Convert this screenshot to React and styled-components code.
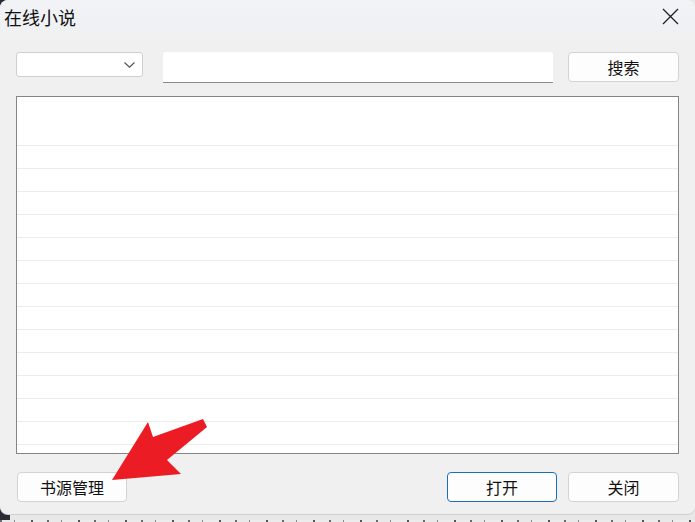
import React from "react";
import styled, { createGlobalStyle } from "styled-components";

const GlobalStyle = createGlobalStyle`
  html, body {
    margin: 0;
    padding: 0;
    background: #dedede;
  }
  body {
    font-family: "Noto Sans CJK SC", "Noto Sans", sans-serif;
  }
`;

const Desktop = styled.div`
  position: relative;
  width: 695px;
  height: 522px;
  overflow: hidden;
  background:
    repeating-linear-gradient(90deg, #6a6a6a 0 2px, #e9e9e9 2px 14px, #8a8a8a 14px 15px, #ececec 15px 31px, #555 31px 33px, #ebebeb 33px 47px) bottom / 100% 2px no-repeat,
    linear-gradient(90deg, #2b2b35 0 10px, #e8e8e8 10px);
  display: flex;
  flex-direction: column;
`;

const Window = styled.div`
  width: 695px;
  height: 514px;
  border-radius: 8px;
  overflow: hidden;
  background: #f0f0f0;
  display: flex;
  flex-direction: column;
  box-shadow: 0 1px 0 #cfcfcf;
`;

const TitleBar = styled.div`
  height: 36px;
  flex: none;
  display: flex;
  align-items: center;
  justify-content: space-between;
  padding: 0 16px 0 4px;
  background: linear-gradient(#f1f3f6, #eff0f2);
`;

const Title = styled.span`
  font-size: 18px;
  color: #111;
  line-height: 1;
  margin-top: -3px;
`;

const CloseIcon = styled.svg`
  width: 17px;
  height: 17px;
  margin-top: -3px;
`;

const Body = styled.div`
  flex: 1;
  display: flex;
  flex-direction: column;
  padding: 16px 16px 12px 16px;
`;

const TopRow = styled.div`
  display: flex;
  align-items: flex-start;
  height: 31px;
`;

const Combo = styled.div`
  width: 127px;
  height: 25px;
  box-sizing: border-box;
  background: #fff;
  border: 1px solid #cfcfcf;
  border-radius: 3px;
  display: flex;
  align-items: center;
  justify-content: flex-end;
  padding-right: 7px;
`;

const SearchInput = styled.div`
  width: 390px;
  height: 31px;
  margin-left: 20px;
  box-sizing: border-box;
  background: #fff;
  border-bottom: 1px solid #8a8a8a;
  border-radius: 3px 3px 0 0;
`;

const Button = styled.button`
  width: ${p => p.w || 111}px;
  height: 30px;
  box-sizing: border-box;
  margin: 0;
  padding: 0;
  font-family: "Noto Sans CJK SC", sans-serif;
  font-size: 16px;
  color: #111;
  background: #fdfdfd;
  border: ${p => (p.primary ? "1.5px solid #1a6fbd" : "1px solid #d3d3d3")};
  border-radius: 4px;
  display: flex;
  align-items: center;
  justify-content: center;
  line-height: 1;
`;

const SearchButton = styled(Button)`
  margin-left: 15px;
`;

const List = styled.div`
  margin-top: 13px;
  height: 358px;
  box-sizing: border-box;
  border: 1px solid #858585;
  background: #fff;
  overflow: hidden;
`;

const ListHeader = styled.div`
  height: 26px;
`;

const Row = styled.div`
  height: 23px;
  box-sizing: border-box;
  border-bottom: 1px solid #ececec;
`;

const BottomRow = styled.div`
  margin-top: 18px;
  display: flex;
  align-items: center;
  padding-left: 1px;
`;

const Spacer = styled.div`
  flex: 1;
`;

const GapButton = styled(Button)`
  margin-left: 11px;
`;

const Arrow = styled.svg`
  position: absolute;
  left: 0;
  top: 0;
  width: 695px;
  height: 522px;
  pointer-events: none;
`;

export default function App() {
  return (
    <>
      <GlobalStyle />
      <Desktop>
        <Window>
          <TitleBar>
            <Title>在线小说</Title>
            <CloseIcon viewBox="0 0 17 17">
              <path d="M1 1 L16 16 M16 1 L1 16" stroke="#1a1a1a" strokeWidth="1.2" fill="none" />
            </CloseIcon>
          </TitleBar>
          <Body>
            <TopRow>
              <Combo>
                <svg width="11" height="6" viewBox="0 0 11 6">
                  <path d="M0.5 0.5 L5.5 5.2 L10.5 0.5" stroke="#505050" strokeWidth="1.1" fill="none" />
                </svg>
              </Combo>
              <SearchInput />
              <SearchButton w={111}>搜索</SearchButton>
            </TopRow>
            <List>
              <ListHeader />
              {Array.from({ length: 15 }).map((_, i) => (
                <Row key={i} />
              ))}
            </List>
            <BottomRow>
              <Button w={110}>书源管理</Button>
              <Spacer />
              <Button w={110} primary>打开</Button>
              <GapButton w={111}>关闭</GapButton>
            </BottomRow>
          </Body>
        </Window>
        <Arrow viewBox="0 0 695 522">
          <polygon
            points="112,480 148,422 153,437 203,419 207,427 167,460 181,474"
            fill="#ec1c24"
          />
        </Arrow>
      </Desktop>
    </>
  );
}
